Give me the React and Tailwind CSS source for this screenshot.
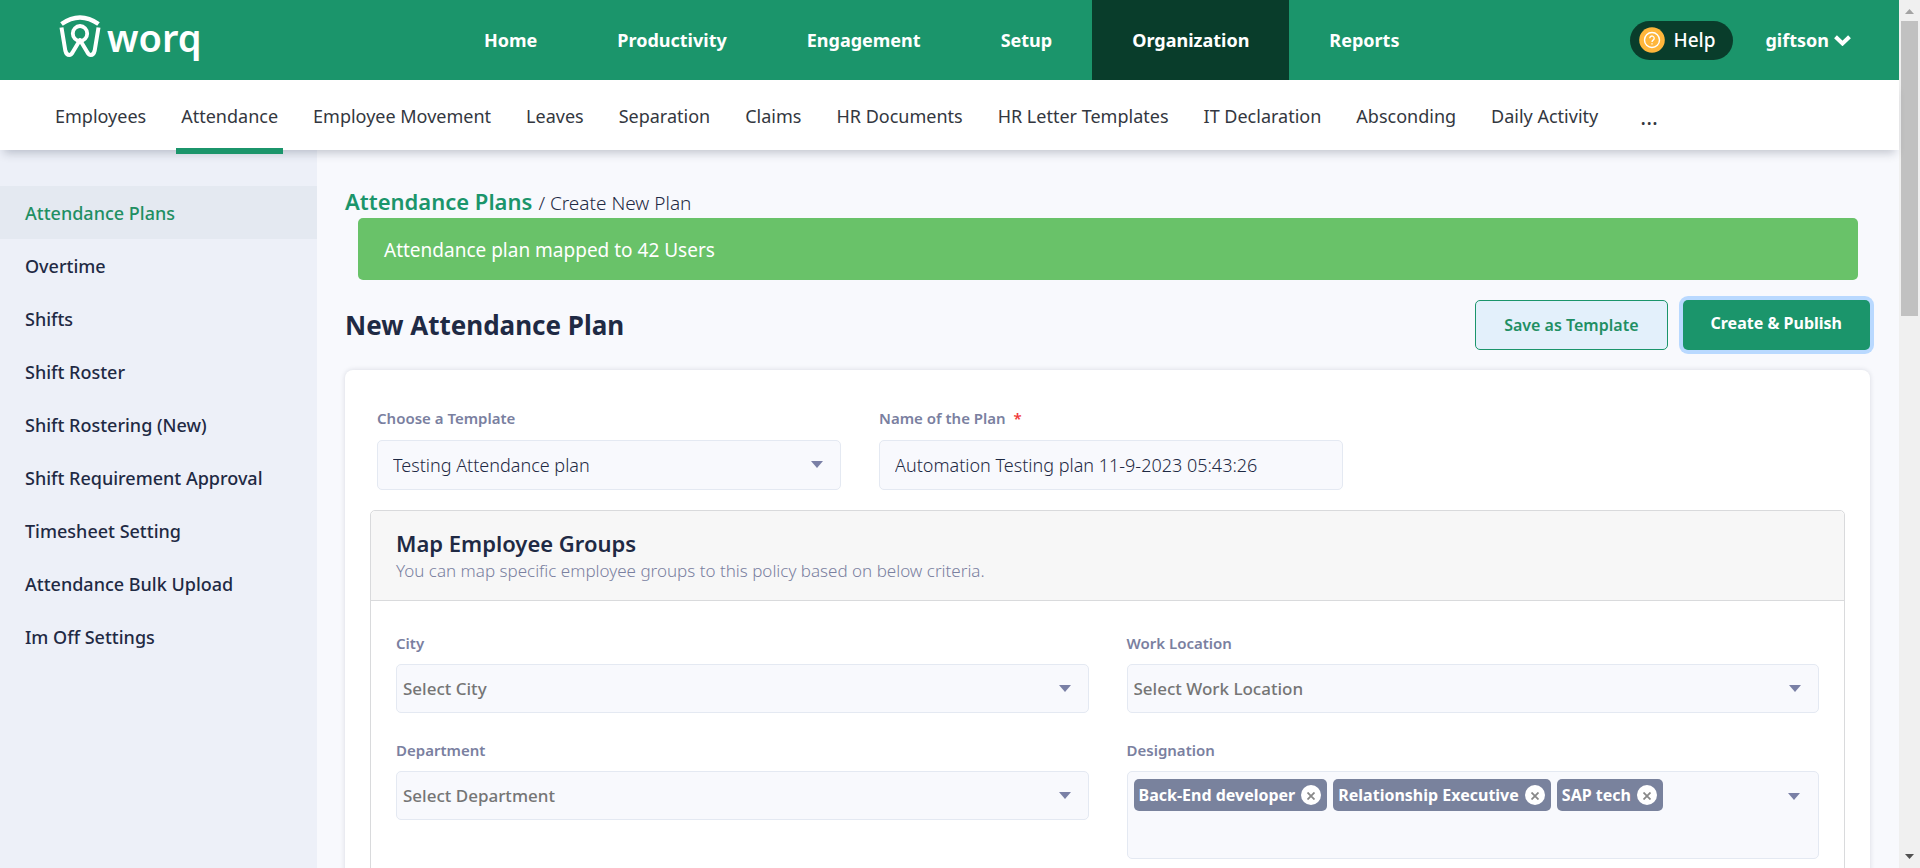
import React from "react";

const mainNav = ["Home", "Productivity", "Engagement", "Setup", "Organization", "Reports"];

const subNav = [
  "Employees",
  "Attendance",
  "Employee Movement",
  "Leaves",
  "Separation",
  "Claims",
  "HR Documents",
  "HR Letter Templates",
  "IT Declaration",
  "Absconding",
  "Daily Activity",
];

const sideNav = [
  "Attendance Plans",
  "Overtime",
  "Shifts",
  "Shift Roster",
  "Shift Rostering (New)",
  "Shift Requirement Approval",
  "Timesheet Setting",
  "Attendance Bulk Upload",
  "Im Off Settings",
];

const designations = ["Back-End developer", "Relationship Executive", "SAP tech"];

function Logo() {
  return (
    <a href="#home" aria-label="worq" className="flex items-center gap-[6px] text-white">
      <svg width="42" height="44" viewBox="0 0 42 44" fill="none" stroke="currentColor" aria-hidden="true">
        <path d="M2.500 9Q21 -4 39.500 9" strokeWidth="4.400" />
        <path
          d="M2.500 12.500L6.300 35.500Q7.300 40 10.300 40Q12.300 40 13.800 37L21 25L28.200 37Q29.700 40 31.700 40Q34.700 40 35.700 35.500L39.500 12.500"
          strokeWidth="4"
          strokeLinejoin="round"
        />
        <ellipse cx="21" cy="18.500" rx="7.200" ry="7.500" strokeWidth="3.800" />
      </svg>
      <span className="font-['Noto_Sans',sans-serif] text-[38px] leading-[44px] font-semibold">worq</span>
    </a>
  );
}

function Caret({ className }) {
  return (
    <svg
      width="12"
      height="7"
      viewBox="0 0 12 7"
      aria-hidden="true"
      className={`pointer-events-none absolute right-[18px] text-[#7a80a6] ${className}`}
    >
      <path d="M0 0H12L6 7Z" fill="currentColor" />
    </svg>
  );
}

const labelClass = "text-[15px] leading-5 font-semibold text-[#7a80a0]";

function SelectField({ id, label }) {
  return (
    <div className="flex flex-col gap-[11px]">
      <label htmlFor={id} className={labelClass}>
        {label}
      </label>
      <div className="relative">
        <select
          id={id}
          className="h-[49px] w-full appearance-none rounded-[5px] border border-[#e4e9f2] bg-[#f8f9fd] px-[6px] text-[17px] font-medium text-[#757575]"
        >
          <option>Select {label}</option>
        </select>
        <Caret className="top-[21px]" />
      </div>
    </div>
  );
}

export default function App() {
  return (
    <div className="flex h-screen overflow-hidden bg-[#f8f9fd] font-['Noto_Sans','Open_Sans',sans-serif] text-[#1f2a44]">
      <div className="flex min-w-0 flex-1 flex-col">
        <header className="flex h-20 shrink-0 items-stretch bg-[#1b956b] text-white">
          <div className="flex w-[444px] shrink-0 items-start pt-[15px] pl-[59px]">
            <Logo />
          </div>
          <nav className="flex">
            {mainNav.map((item) => (
              <a
                key={item}
                href={`#${item}`}
                className={`flex items-center px-10 pt-px text-[18px] font-bold ${
                  item === "Organization" ? "bg-[#093d2b]" : ""
                }`}
              >
                {item}
              </a>
            ))}
          </nav>
          <div className="ml-auto flex items-center gap-8 pr-12">
            <button className="flex h-[39px] items-center gap-2 rounded-full bg-[#093d2b] pr-[18px] pl-[9px] text-[19px] font-medium">
              <svg width="26" height="26" viewBox="0 0 26 26" fill="none" aria-hidden="true">
                <circle cx="13" cy="13" r="12.800" fill="#ffb63b" />
                <circle cx="13" cy="13" r="7.500" stroke="#fff" strokeWidth="1.400" />
                <path
                  d="M10.800 11.300a2.200 2.200 0 1 1 3.500 1.700c-.8.600-1.300.9-1.300 1.900M13 16.200v1.200"
                  stroke="#fff"
                  strokeWidth="1.300"
                />
              </svg>
              Help
            </button>
            <button className="flex items-center gap-[5px] text-[18px] font-bold">
              giftson
              <svg width="17" height="11" viewBox="0 0 17 11" fill="none" aria-hidden="true">
                <path d="M1.500 1.700L8.500 8.500L15.500 1.700" stroke="currentColor" strokeWidth="4" />
              </svg>
            </button>
          </div>
        </header>

        <nav className="relative z-10 flex h-[70px] shrink-0 items-stretch gap-[25px] bg-white pl-[50px] text-[18px] text-[#333740] shadow-[0_7px_9px_-4px_rgba(31,42,68,0.25)]">
          {subNav.map((item) => (
            <a key={item} href={`#${item}`} className="relative flex items-center px-[5px] pt-[2px]">
              {item}
              {item === "Attendance" && (
                <span className="absolute inset-x-0 -bottom-1 h-[6px] bg-[#1b956b]" />
              )}
            </a>
          ))}
          <button className="flex items-center px-3 pt-[2px] text-[22px]" aria-label="More">
            ...
          </button>
        </nav>

        <div className="flex min-h-0 flex-1">
          <aside className="w-[317px] shrink-0 bg-[#edf0f8] pt-9">
            {sideNav.map((item) => (
              <a
                key={item}
                href={`#${item}`}
                className={`flex h-[53px] items-center pt-px pl-[25px] text-[18px] font-medium ${
                  item === "Attendance Plans" ? "bg-[#e4e9f1] text-[#1f8f63]" : ""
                }`}
              >
                {item}
              </a>
            ))}
          </aside>

          <main className="min-w-0 flex-1 overflow-hidden pt-9 pr-[29px] pl-7">
            <div className="flex h-8 items-baseline gap-[6px] text-[19px] leading-[30px] font-[350]">
              <a href="#plans" className="text-[22px] font-semibold text-[#1b956b]">
                Attendance Plans
              </a>
              <span>/ Create New Plan</span>
            </div>

            <div
              role="status"
              className="mr-3 ml-[13px] flex h-[62px] items-center rounded-[5px] bg-[#69c269] px-[26px] pt-[2px] text-[19px] text-white"
            >
              Attendance plan mapped to 42 Users
            </div>

            <div className="mt-5 flex items-center">
              <h1 className="text-[26px] font-bold">New Attendance Plan</h1>
              <div className="ml-auto flex gap-[15px] text-[16px]">
                <button className="h-[50px] rounded-[5px] border border-[#1b956b] bg-[#e3f0fb] px-7 font-semibold text-[#1f8f63]">
                  Save as Template
                </button>
                <button className="h-[50px] rounded-[5px] bg-[#1b956b] px-7 pb-1 font-bold text-white shadow-[0_0_0_4px_#b9d9ff]">
                  Create &amp; Publish
                </button>
              </div>
            </div>

            <section className="mt-5 min-h-screen rounded-lg bg-white px-[25px] pt-[38px] shadow-[0_0_5px_rgba(31,42,68,0.15)]">
              <div className="flex gap-[38px] pl-[7px]">
                <div className="flex w-[464px] flex-col gap-3">
                  <label htmlFor="template" className={labelClass}>
                    Choose a Template
                  </label>
                  <div className="relative">
                    <select
                      id="template"
                      className="h-[50px] w-full appearance-none rounded-[5px] border border-[#e4e9f2] bg-[#f8f9fd] px-[15px] text-[18px] font-[350]"
                    >
                      <option>Testing Attendance plan</option>
                    </select>
                    <Caret className="top-[21px]" />
                  </div>
                </div>
                <div className="flex w-[464px] flex-col gap-3">
                  <label htmlFor="plan-name" className={labelClass}>
                    Name of the Plan <span className="pl-1 text-[#f03a3a]">*</span>
                  </label>
                  <input
                    id="plan-name"
                    defaultValue="Automation Testing plan 11-9-2023 05:43:26"
                    className="h-[50px] w-full rounded-[5px] border border-[#e4e9f2] bg-[#f8f9fd] px-[15px] text-[18px] font-[350]"
                  />
                </div>
              </div>

              <div className="mt-5 min-h-screen rounded-[5px] border border-[#d9dadc]">
                <div className="h-[90px] rounded-t-[5px] border-b border-[#d9dadc] bg-[#f7f7f7] px-[25px] pt-4">
                  <h2 className="text-[22px] leading-8 font-semibold">Map Employee Groups</h2>
                  <p className="text-[17px] leading-6 font-[350] text-[#7a80a0]">
                    You can map specific employee groups to this policy based on below criteria.
                  </p>
                </div>
                <div className="grid grid-cols-2 gap-x-[38px] gap-y-[27px] px-[25px] pt-8">
                  <SelectField id="city" label="City" />
                  <SelectField id="location" label="Work Location" />
                  <SelectField id="department" label="Department" />
                  <div className="flex flex-col gap-[11px]">
                    <label htmlFor="designation" className={labelClass}>
                      Designation
                    </label>
                    <div className="relative flex h-[88px] items-start gap-[6px] rounded-[5px] border border-[#e4e9f2] bg-[#f8f9fd] px-[6px] pt-[7px]">
                      {designations.map((name) => (
                        <span
                          key={name}
                          className="flex h-8 shrink-0 items-center gap-[6px] rounded-[5px] bg-[#79829d] pr-[6px] pl-[5px] text-[16px] font-bold text-white"
                        >
                          {name}
                          <button
                            aria-label={`Remove ${name}`}
                            className="flex size-5 items-center justify-center rounded-full bg-white pt-[2px] text-[#888]"
                          >
                            <svg width="8" height="8" viewBox="0 0 8 8" aria-hidden="true">
                              <path d="M0.500 0.500L7.500 7.500M7.500 0.500L0.500 7.500" stroke="currentColor" strokeWidth="1.800" />
                            </svg>
                          </button>
                        </span>
                      ))}
                      <select id="designation" className="h-8 min-w-0 flex-1 appearance-none bg-transparent" />
                      <Caret className="top-[21px]" />
                    </div>
                  </div>
                </div>
              </div>
            </section>
          </main>
        </div>
      </div>

      <div className="flex w-[21px] shrink-0 flex-col items-center bg-[#f0f0f0]" aria-hidden="true">
        <svg width="21" height="21" viewBox="0 0 21 21">
          <path d="M6 14L10.500 9L15 14Z" fill="#a3a3a3" />
        </svg>
        <div className="h-[34%] w-[17px] bg-[#c1c1c1]" />
        <svg width="21" height="21" viewBox="0 0 21 21" className="mt-auto">
          <path d="M6 7L10.500 12L15 7Z" fill="#505050" />
        </svg>
      </div>
    </div>
  );
}
